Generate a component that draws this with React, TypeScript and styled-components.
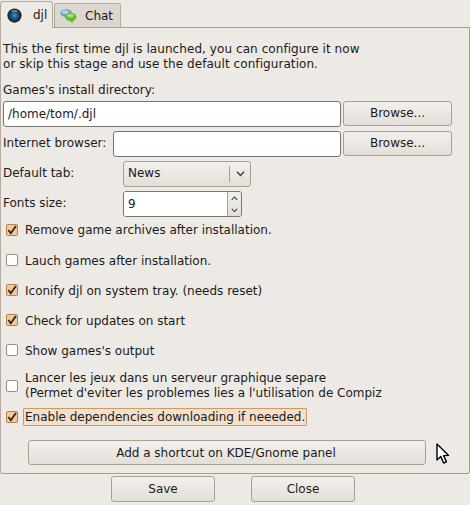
import styled, { createGlobalStyle } from "styled-components";

const Global = createGlobalStyle`
  html, body {
    margin: 0;
    padding: 0;
    background: #edeae6;
  }
  body {
    width: 470px;
    height: 505px;
    overflow: hidden;
    font-family: "DejaVu Sans", sans-serif;
    font-size: 12px;
    color: #1c1a18;
  }
`;

const Window = styled.div`
  width: 470px;
  height: 505px;
  display: flex;
  flex-direction: column;
  position: relative;
`;

const TabBar = styled.div`
  height: 27px;
  padding-top: 1px;
  box-sizing: border-box;
  display: flex;
  align-items: flex-end;
  gap: 1px;
`;

const Tab = styled.div<{ $active?: boolean; $width: number }>`
  width: ${(p) => p.$width}px;
  height: ${(p) => (p.$active ? 27 : 24)}px;
  box-sizing: border-box;
  display: flex;
  align-items: center;
  gap: ${(p) => (p.$active ? 11 : 8)}px;
  padding-left: ${(p) => (p.$active ? 6 : 5)}px;
  border: 1px solid #b3aba1;
  border-bottom: none;
  border-radius: 3px 3px 0 0;
  background: ${(p) => (p.$active ? "#edeae6" : "#dcd7d0")};
  position: relative;
  z-index: ${(p) => (p.$active ? 2 : 1)};
  margin-bottom: ${(p) => (p.$active ? -1 : 0)}px;
`;

const Pane = styled.div`
  width: 470px;
  height: 447px;
  box-sizing: border-box;
  border: 1px solid #a89f94;
  border-left-color: #b3aba1;
  border-radius: 0 0 3px 3px;
  padding: 14px 2px 0 2px;
  display: flex;
  flex-direction: column;
`;

const Intro = styled.div`
  line-height: 15px;
  margin-bottom: 11px;
  letter-spacing: 0.07px;
`;

const FieldLabel = styled.div`
  line-height: 15px;
  margin-bottom: 3px;
`;

const Fields = styled.div`
  display: flex;
  flex-direction: column;
  gap: 4px;
`;

const Row = styled.div`
  display: flex;
  align-items: flex-start;
  height: 26px;
`;

const RowLabel = styled.div<{ $width: number }>`
  width: ${(p) => p.$width}px;
  flex: none;
  line-height: 25px;
`;

const TextInput = styled.div<{ $width: number }>`
  width: ${(p) => p.$width}px;
  height: 26px;
  box-sizing: border-box;
  flex: none;
  background: #fff;
  border: 1px solid #7d756b;
  border-radius: 3px;
  padding-left: 4px;
  line-height: 24px;
`;

const Button = styled.div<{ $width: number }>`
  width: ${(p) => p.$width}px;
  height: 25px;
  box-sizing: border-box;
  flex: none;
  text-align: center;
  line-height: 23px;
  border: 1px solid #a8a095;
  border-radius: 3px;
  background: linear-gradient(#f1efec 0%, #ece9e5 45%, #e2ded8 100%);
`;

const Browse = styled(Button)`
  margin-left: 2px;
`;

const Shortcut = styled(Button)`
  line-height: 24px;
  padding-right: 2px;
`;

const Combo = styled(Button)`
  height: 26px;
  display: flex;
  align-items: center;
  text-align: left;
  padding-left: 4px;
`;

const ComboText = styled.span`
  flex: 1;
  padding-bottom: 2px;
`;

const ComboArrow = styled.span`
  width: 20px;
  height: 16px;
  border-left: 1px solid #a8a095;
  display: flex;
  align-items: center;
  justify-content: center;
`;

const Spin = styled.div`
  width: 119px;
  height: 26px;
  display: flex;
  box-sizing: border-box;
  border: 1px solid #7d756b;
  border-radius: 3px;
  overflow: hidden;
`;

const SpinValue = styled.div`
  flex: 1;
  background: #fff;
  padding-left: 4px;
  line-height: 24px;
  border-right: 1px solid #a8a095;
`;

const SpinButtons = styled.div`
  width: 13px;
  display: flex;
  flex-direction: column;
  align-items: center;
  justify-content: space-around;
  background: linear-gradient(#f1efec, #e2ded8);
`;

const Options = styled.div`
  display: flex;
  flex-direction: column;
  margin-top: -3px;
`;

const Option = styled.div<{ $height: number }>`
  height: ${(p) => p.$height}px;
  display: flex;
  align-items: center;
  padding-left: 3px;
`;

const Box = styled.span<{ $checked?: boolean }>`
  width: 10px;
  height: 10px;
  flex: none;
  box-sizing: content-box;
  border: 1px solid ${(p) => (p.$checked ? "#b5814a" : "#968e84")};
  border-radius: 2px;
  background: ${(p) => (p.$checked ? "#f3c99a" : "#fff")};
  margin-right: 6px;
  display: flex;
  align-items: center;
  justify-content: center;
`;

const OptionText = styled.span<{ $focused?: boolean }>`
  line-height: 15px;
  padding: 0 1px;
  ${(p) =>
    p.$focused &&
    `
    border: 1px solid #d09a63;
    background: #f3e0cc;
    margin-left: -1px;
    padding: 1px 1px 0;
    border-radius: 1px;
  `}
`;

const SingleLine = styled(OptionText)`
  margin-top: 2px;
`;

const ShortcutRow = styled.div`
  display: flex;
  align-items: center;
  margin-top: 13px;
  padding-left: 25px;
`;

const Cursor = styled.svg`
  margin-left: 10px;
  margin-top: 2px;
`;

const Footer = styled.div`
  display: flex;
  justify-content: flex-start;
  gap: 36px;
  padding: 2px 0 0 111px;
`;

const FooterButton = styled(Button)`
  height: 26px;
  line-height: 24px;
`;

function Globe() {
  return (
    <svg width="15" height="15" viewBox="0 0 16 16">
      <defs>
        <radialGradient id="globe" cx="50%" cy="50%" r="52%">
          <stop offset="0%" stopColor="#2f9be0" />
          <stop offset="50%" stopColor="#174d78" />
          <stop offset="100%" stopColor="#14171b" />
        </radialGradient>
      </defs>
      <circle cx="8" cy="8" r="7.6" fill="url(#globe)" />
      <ellipse cx="8" cy="3.2" rx="3.4" ry="1.4" fill="#8a9096" opacity="0.7" />
    </svg>
  );
}

function Bubbles() {
  return (
    <svg width="17" height="16" viewBox="0 0 18 16">
      <ellipse cx="6.5" cy="5" rx="6" ry="4.2" fill="#6f9fd0" />
      <ellipse cx="5.5" cy="3.8" rx="3.6" ry="2" fill="#b9d3ec" />
      <ellipse cx="11.5" cy="9" rx="6" ry="4.4" fill="#5fbf2a" />
      <ellipse cx="11" cy="7.6" rx="3.6" ry="2" fill="#a6e36a" />
      <path d="M10 12 L13 16 L14 12 Z" fill="#5fbf2a" />
    </svg>
  );
}

function Check() {
  return (
    <svg width="10" height="10" viewBox="0 0 11 11">
      <path d="M1.5 5.5 L4.2 9 L9.8 1.2" fill="none" stroke="#2e2416" strokeWidth="2" />
    </svg>
  );
}

function Chevron({ up, size = 9 }: { up?: boolean; size?: number }) {
  return (
    <svg width={size} height={size / 2 + 1} viewBox="0 0 9 5.5">
      <path
        d={up ? "M1 4.8 L4.5 1 L8 4.8" : "M1 0.8 L4.5 4.5 L8 0.8"}
        fill="none"
        stroke="#3a3632"
        strokeWidth="1.3"
      />
    </svg>
  );
}

const options = [
  { text: "Remove game archives after installation.", checked: true, height: 31 },
  { text: "Lauch games after installation.", height: 30 },
  { text: "Iconify djl on system tray. (needs reset)", checked: true, height: 30 },
  { text: "Check for updates on start", checked: true, height: 30 },
  { text: "Show games's output", height: 30 },
];

function App() {
  return (
    <Window>
      <Global />
      <TabBar>
        <Tab $active $width={53}>
          <Globe />
          <span>djl</span>
        </Tab>
        <Tab $width={67}>
          <Bubbles />
          <span>Chat</span>
        </Tab>
      </TabBar>
      <Pane>
        <Intro>
          This the first time djl is launched, you can configure it now
          <br />
          or skip this stage and use the default configuration.
        </Intro>
        <FieldLabel>Games's install directory:</FieldLabel>
        <Fields>
          <Row>
            <TextInput $width={338}>/home/tom/.djl</TextInput>
            <Browse $width={109}>Browse...</Browse>
          </Row>
          <Row>
            <RowLabel $width={110}>Internet browser:</RowLabel>
            <TextInput $width={228} />
            <Browse $width={109}>Browse...</Browse>
          </Row>
          <Row>
            <RowLabel $width={120}>Default tab:</RowLabel>
            <Combo $width={128}>
              <ComboText>News</ComboText>
              <ComboArrow>
                <Chevron />
              </ComboArrow>
            </Combo>
          </Row>
          <Row>
            <RowLabel $width={120}>Fonts size:</RowLabel>
            <Spin>
              <SpinValue>9</SpinValue>
              <SpinButtons>
                <Chevron up size={7} />
                <Chevron size={7} />
              </SpinButtons>
            </Spin>
          </Row>
        </Fields>
        <Options>
          {options.map((o) => (
            <Option key={o.text} $height={o.height}>
              <Box $checked={o.checked}>{o.checked && <Check />}</Box>
              <SingleLine>{o.text}</SingleLine>
            </Option>
          ))}
          <Option $height={42}>
            <Box />
            <OptionText>
              Lancer les jeux dans un serveur graphique separe
              <br />
              (Permet d'eviter les problemes lies a l'utilisation de Compiz
            </OptionText>
          </Option>
          <Option $height={20}>
            <Box $checked>
              <Check />
            </Box>
            <OptionText $focused>Enable dependencies downloading if neeeded.</OptionText>
          </Option>
        </Options>
        <ShortcutRow>
          <Shortcut $width={398}>Add a shortcut on KDE/Gnome panel</Shortcut>
          <Cursor width="14" height="22" viewBox="0 0 14 22">
            <path
              d="M1 1 L1 17 L4.8 13.6 L7.6 20 L10.4 18.8 L7.6 12.6 L12.6 12.4 Z"
              fill="#fff"
              stroke="#000"
              strokeWidth="1.4"
              strokeLinejoin="round"
            />
          </Cursor>
        </ShortcutRow>
      </Pane>
      <Footer>
        <FooterButton $width={104}>Save</FooterButton>
        <FooterButton $width={104}>Close</FooterButton>
      </Footer>
    </Window>
  );
}

export default App;
